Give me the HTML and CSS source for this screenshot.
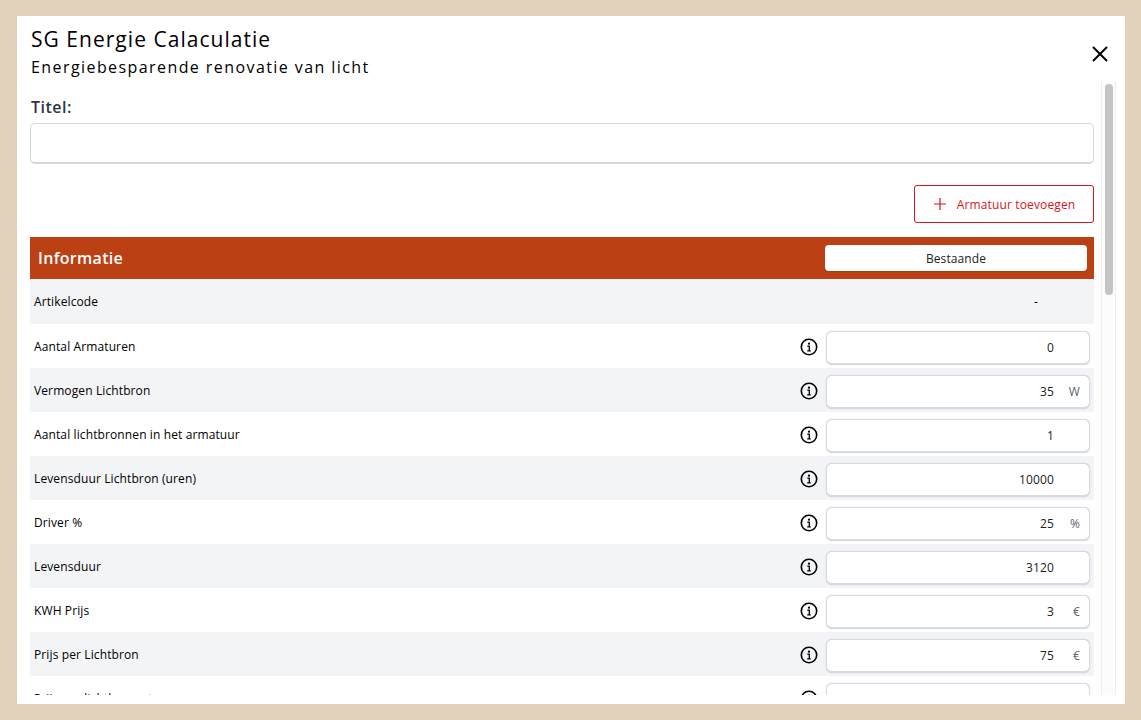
FILE: index.html
```html
<!DOCTYPE html>
<html lang="nl">
<head>
<meta charset="utf-8">
<title>SG Energie Calaculatie</title>
<link rel="stylesheet" href="styles.css">
</head>
<body>
<div class="modal">
  <header class="head">
    <div class="head-text">
      <h1 class="title">SG Energie Calaculatie</h1>
      <p class="subtitle">Energiebesparende renovatie van licht</p>
    </div>
    <button class="close" aria-label="Sluiten">
      <svg width="16" height="16" viewBox="0 0 16 16"><path d="M1 1 15 15M15 1 1 15" stroke="#000" stroke-width="2" fill="none"/></svg>
    </button>
  </header>
  <div class="body">
    <main class="content">
      <label class="field-label">Titel:</label>
      <div class="title-input"></div>
      <div class="actions">
        <button class="add">
          <svg width="14" height="14" viewBox="0 0 14 14"><path d="M7 1v12M1 7h12" stroke="#d8141c" stroke-width="1.2" fill="none"/></svg>
          Armatuur toevoegen
        </button>
      </div>
      <div class="table-head">
        <span class="table-title">Informatie</span>
        <button class="mode">Bestaande</button>
      </div>
      <div class="row code-row"><span class="label">Artikelcode</span><span class="dash">-</span></div>
      <div class="row"><span class="label">Aantal Armaturen</span>
        <svg class="info" viewBox="0 0 18 18"><use href="#i"/></svg>
        <div class="input"><span class="val">0</span><span class="unit"></span></div></div>
      <div class="row"><span class="label">Vermogen Lichtbron</span>
        <svg class="info" viewBox="0 0 18 18"><use href="#i"/></svg>
        <div class="input"><span class="val">35</span><span class="unit">W</span></div></div>
      <div class="row"><span class="label">Aantal lichtbronnen in het armatuur</span>
        <svg class="info" viewBox="0 0 18 18"><use href="#i"/></svg>
        <div class="input"><span class="val">1</span><span class="unit"></span></div></div>
      <div class="row"><span class="label">Levensduur Lichtbron (uren)</span>
        <svg class="info" viewBox="0 0 18 18"><use href="#i"/></svg>
        <div class="input"><span class="val">10000</span><span class="unit"></span></div></div>
      <div class="row"><span class="label">Driver %</span>
        <svg class="info" viewBox="0 0 18 18"><use href="#i"/></svg>
        <div class="input"><span class="val">25</span><span class="unit">%</span></div></div>
      <div class="row"><span class="label">Levensduur</span>
        <svg class="info" viewBox="0 0 18 18"><use href="#i"/></svg>
        <div class="input"><span class="val">3120</span><span class="unit"></span></div></div>
      <div class="row"><span class="label">KWH Prijs</span>
        <svg class="info" viewBox="0 0 18 18"><use href="#i"/></svg>
        <div class="input"><span class="val">3</span><span class="unit">€</span></div></div>
      <div class="row"><span class="label">Prijs per Lichtbron</span>
        <svg class="info" viewBox="0 0 18 18"><use href="#i"/></svg>
        <div class="input"><span class="val">75</span><span class="unit">€</span></div></div>
      <div class="row"><span class="label">Prijs per lichtbronset</span>
        <svg class="info" viewBox="0 0 18 18"><use href="#i"/></svg>
        <div class="input"><span class="val"></span><span class="unit"></span></div></div>
    </main>
    <div class="track"><div class="thumb"></div></div>
  </div>
</div>
<svg class="defs" width="0" height="0">
  <symbol id="i" viewBox="0 0 18 18">
    <circle cx="9" cy="9" r="7.7" fill="none" stroke="#000" stroke-width="1.6"/>
    <circle cx="9" cy="5.7" r="1.1" fill="#000"/>
    <path d="M7.3 8.2h2v4.5M7.2 12.9h3.6" fill="none" stroke="#000" stroke-width="1.3"/>
  </symbol>
</svg>
</body>
</html>
```
FILE: styles.css
```css
* { box-sizing: border-box; }
html, body { height: 100%; }
body {
  margin: 0;
  padding: 16px 16px 16px 17px;
  background: #e2d1bb;
  font-family: "Open Sans", sans-serif;
  color: #000;
  overflow: hidden;
}
.modal {
  height: 688px;
  background: #fff;
  display: flex;
  flex-direction: column;
  padding: 0 9px 9px 13px;
}
.head {
  height: 65px;
  flex: none;
  display: flex;
  justify-content: space-between;
  padding-top: 9px;
}
.head-text { padding-left: 1px; }
.title {
  margin: -1px 0 1px;
  font-size: 21px;
  line-height: 30px;
  font-weight: 400;
  letter-spacing: 1.03px;
}
.subtitle {
  margin: 0;
  font-size: 16px;
  line-height: 24px;
  font-weight: 400;
  letter-spacing: 1.42px;
}
.close {
  border: 0;
  padding: 0;
  background: none;
  width: 16px;
  height: 16px;
  margin: 21px 8px 0 0;
  display: block;
}
.close svg { display: block; }
.body {
  flex: 1;
  min-height: 0;
  display: flex;
  gap: 7px;
}
.content {
  width: 1064px;
  flex: none;
  overflow: hidden;
}
.field-label {
  display: block;
  margin-top: 14px;
  padding-left: 1px;
  font-size: 16px;
  line-height: 24px;
  font-weight: 600;
  color: #2d3648;
  letter-spacing: 0.5px;
}
.title-input {
  margin-top: 4px;
  height: 41px;
  border: 1px solid #d4d7de;
  border-bottom-width: 2px;
  border-radius: 5px;
  background: #fff;
}
.actions {
  display: flex;
  justify-content: flex-end;
  margin-top: 21px;
}
.add {
  width: 180px;
  height: 38px;
  display: flex;
  align-items: center;
  justify-content: center;
  gap: 10px;
  border: 1px solid #d8141c;
  border-radius: 3px;
  background: #fff;
  color: #d8141c;
  font: 400 12px "Open Sans", sans-serif;
  letter-spacing: 0.14px;
}
.table-head {
  margin-top: 14px;
  height: 42px;
  background: #bb4115;
  display: flex;
  align-items: center;
  justify-content: space-between;
  padding: 0 7px 0 8px;
}
.table-title {
  color: #fff;
  font-size: 16px;
  font-weight: 600;
  letter-spacing: 0.3px;
}
.mode {
  width: 262px;
  height: 26px;
  border: 0;
  border-radius: 4px;
  background: #fff;
  color: #222;
  font: 400 12px "Open Sans", sans-serif;
  letter-spacing: 0.1px;
  box-shadow: 0 1px 1px rgba(0, 0, 0, .15);
}
.row {
  height: 44px;
  flex: none;
  display: flex;
  align-items: center;
  padding: 0 4px;
  font-size: 12px;
  letter-spacing: 0.115px;
}
.row:nth-of-type(odd) { background: #fff; }
.row:nth-of-type(even) { background: #f3f4f6; }
.code-row { height: 45px; background: #f3f4f6 !important; }
.label { flex: 1; }
.dash { width: 56px; }
.info { width: 18px; height: 18px; margin-right: 8px; margin-top: 1px; }
.input {
  width: 264px;
  height: 34px;
  border: 1px solid #d9dbe2;
  border-bottom-width: 2px;
  border-radius: 6px;
  background: #fff;
  box-shadow: 0 0 1px rgba(120, 125, 140, .45);
  display: flex;
  align-items: center;
  justify-content: flex-end;
  padding-right: 9px;
  margin-top: 3px;
  font-size: 12px;
  color: #222;
}
.unit {
  width: 26px;
  text-align: right;
  color: #5c6472;
}
.track {
  width: 15px;
  flex: none;
  border-left: 1px solid #eee;
  border-right: 1px solid #eee;
  background: #fcfcfc;
  padding: 3px 3px 0;
}
.thumb {
  width: 8px;
  height: 211px;
  border-radius: 4px;
  background: #c4c4c4;
}
.defs { display: block; height: 0; }
```
